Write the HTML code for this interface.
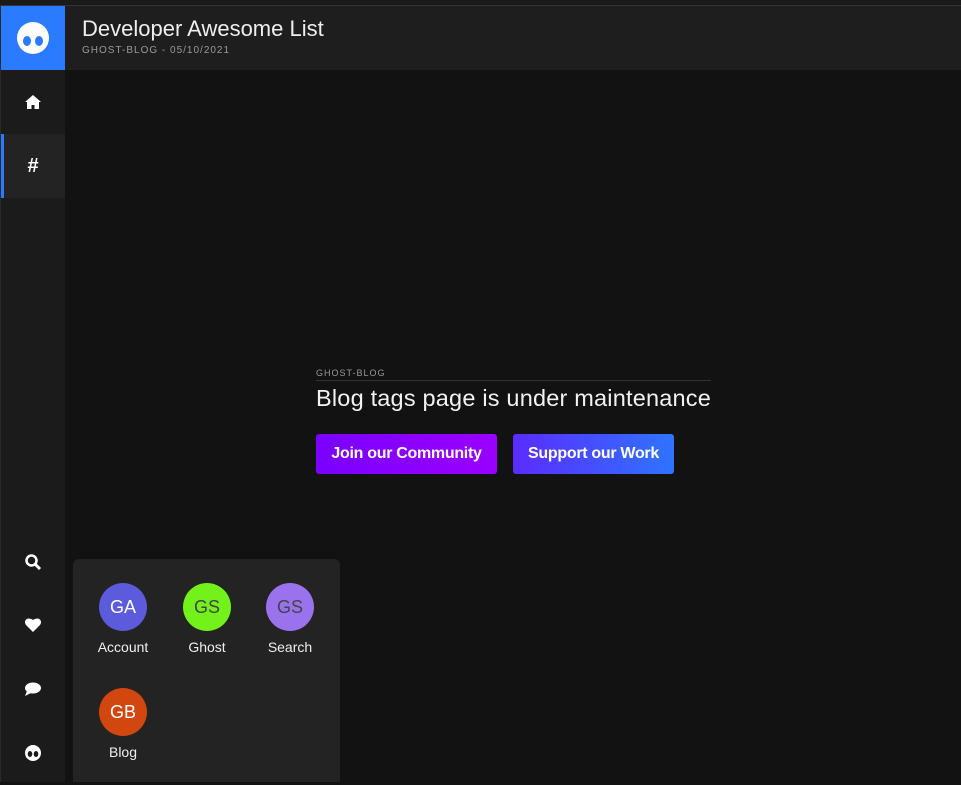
<!DOCTYPE html>
<html><head><style>
*{margin:0;padding:0;box-sizing:border-box}
body{width:961px;height:782px;background:#121212;font-family:"Liberation Sans",sans-serif;position:relative;overflow:hidden}
.top{position:absolute;left:0;top:0;width:961px;height:6px;background:#1a1a1a;border-bottom:1px solid #333}
.hdr{position:absolute;left:65px;top:6px;right:0;height:64px;background:#1e1e1e}
.side{position:absolute;left:0;top:6px;width:65px;bottom:0;background:#1b1b1b;border-left:1px solid #2a2a2a}
.logo{position:absolute;left:1px;top:6px;width:64px;height:64px;background:#2a7bff}
.ico{position:absolute;left:1px;width:64px;height:64px;display:flex;align-items:center;justify-content:center;color:#fff}
.act{background:#232323;border-left:3px solid #2a7bff}
h1{position:absolute;left:82px;top:16px;font-weight:normal;font-size:22px;color:#eee}
.sub{position:absolute;left:82px;top:45px;font-size:10px;letter-spacing:1px;color:#999}
.c{position:absolute;left:316px;top:368px;width:395px}
.c .t{font-size:9px;letter-spacing:1px;color:#999;border-bottom:1px solid #333;padding-bottom:2px}
.c .h{font-size:23.5px;color:#f2f2f2;margin-top:4px;letter-spacing:0.2px}
.btn{position:absolute;top:434px;height:40px;border-radius:3px;color:#fff;font-weight:bold;font-size:16px;display:flex;align-items:center;justify-content:center;letter-spacing:-0.3px}
.panel{position:absolute;left:73px;top:559px;width:267px;height:223px;background:#232323;border-radius:6px 6px 0 0}
.av{position:absolute;width:48px;text-align:center}
.av b{display:flex;width:48px;height:48px;border-radius:50%;align-items:center;justify-content:center;font-weight:normal;font-size:18px}
.av span{display:block;color:#eee;font-size:14px;margin-top:8px;margin-left:-20px;width:88px}
</style></head><body>
<div class="top"></div>
<div class="side"></div>
<div class="hdr"></div>
<div class="logo"><svg width="64" height="64"><circle cx="32" cy="32" r="16" fill="#fff"/><ellipse cx="26" cy="35" rx="4" ry="5" fill="#2a7bff"/><ellipse cx="38" cy="35" rx="4" ry="5" fill="#2a7bff"/></svg></div>
<div class="ico" style="top:70px"><svg width="18" height="16" viewBox="0 0 18 16"><path d="M9 1L1 8h2v7h4.5v-4h3v4H15V8h2z" fill="#fff"/></svg></div>
<div class="ico act" style="top:134px;font-size:20px;font-weight:bold;padding-right:3px">#</div>
<div class="ico" style="top:530px"><svg width="18" height="18"><circle cx="7.5" cy="7.5" r="5" stroke="#fff" stroke-width="2.5" fill="none"/><path d="M11 11l5 5" stroke="#fff" stroke-width="3"/></svg></div>
<div class="ico" style="top:593px"><svg width="18" height="16" viewBox="0 0 18 16"><path d="M9 15L2 8C-1 4 3-1 9 3c6-4 10 1 7 5z" fill="#fff"/></svg></div>
<div class="ico" style="top:657px"><svg width="18" height="16"><ellipse cx="9" cy="7" rx="8" ry="5.5" fill="#fff"/><path d="M3 10L1 15 7 12z" fill="#fff"/></svg></div>
<div class="ico" style="top:721px"><svg width="18" height="18"><circle cx="9" cy="9" r="8" fill="#fff"/><ellipse cx="6" cy="10" rx="2.3" ry="3" fill="#1b1b1b"/><ellipse cx="12" cy="10" rx="2.3" ry="3" fill="#1b1b1b"/></svg></div>
<h1>Developer Awesome List</h1>
<div class="sub">GHOST-BLOG - 05/10/2021</div>
<div class="c"><div class="t">GHOST-BLOG</div><div class="h">Blog tags page is under maintenance</div></div>
<div class="btn" style="left:316px;width:181px;background:linear-gradient(90deg,#7a00ff,#9a00ff)">Join our Community</div>
<div class="btn" style="left:513px;width:161px;background:linear-gradient(90deg,#5a2cff,#2f74ff)">Support our Work</div>
<div class="panel">
<div class="av" style="left:26px;top:24px"><b style="background:#5b5bdc;color:#fff">GA</b><span>Account</span></div>
<div class="av" style="left:110px;top:24px"><b style="background:#72f21a;color:#444">GS</b><span>Ghost</span></div>
<div class="av" style="left:193px;top:24px"><b style="background:#9b72ee;color:#444">GS</b><span>Search</span></div>
<div class="av" style="left:26px;top:129px"><b style="background:#d2460f;color:#fff">GB</b><span>Blog</span></div>
</div>
</body></html>
